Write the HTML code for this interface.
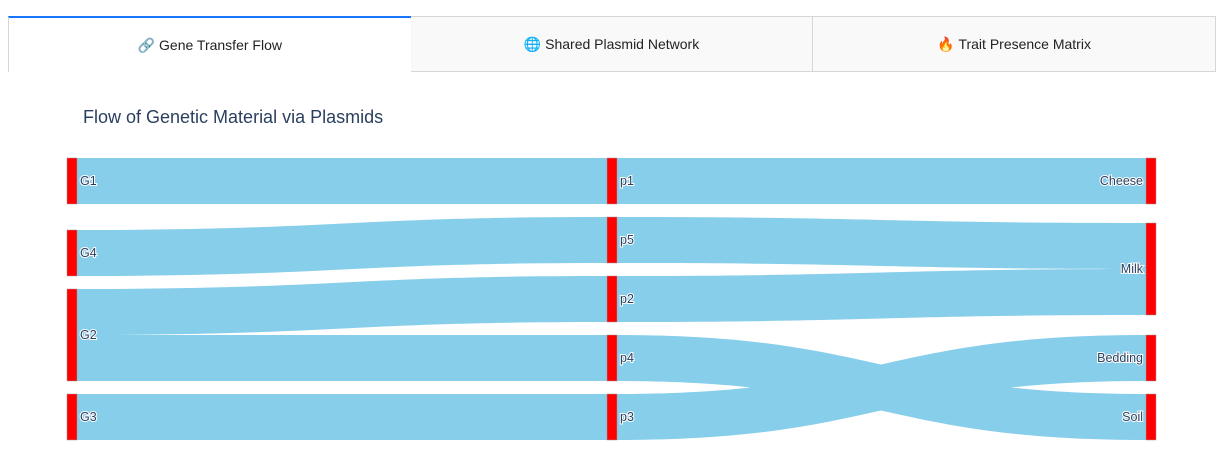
<!DOCTYPE html>
<html><head><meta charset="utf-8"><style>
body{margin:0;width:1224px;height:460px;background:#fff;font-family:"Liberation Sans",sans-serif;overflow:hidden;position:relative}
.tabs{position:absolute;left:8px;top:16px;width:1208px;height:56px;display:flex}
.tab{flex:1;box-sizing:border-box;height:56px;background:#f9f9f9;border:1px solid #d6d6d6;display:flex;align-items:center;justify-content:center;font-size:14px;color:#222}
.tab.a{background:#fff;border:none;border-top:2px solid #1975fa;border-left:1px solid #d6d6d6;padding-bottom:0}
.tab+.tab{border-left:none}
svg{position:absolute;left:0;top:0}
text{font-family:"Liberation Sans",sans-serif;font-size:12.5px;fill:#2a3f5f;paint-order:stroke;stroke:#fff;stroke-width:2px}
</style></head><body>
<div class="tabs">
<div class="tab a">🔗 Gene Transfer Flow</div>
<div class="tab">🌐 Shared Plasmid Network</div>
<div class="tab">🔥 Trait Presence Matrix</div>
</div>
<div style="position:absolute;left:83px;top:107px;font-size:18px;color:#2a3f5f">Flow of Genetic Material via Plasmids</div>
<svg width="1224" height="460">
<g fill="#87ceeb">
<path d="M77 158C342 158 342 158 607 158L607 204C342 204 342 204 77 204Z"/>
<path d="M77 230C342 230 342 217 607 217L607 263C342 263 342 276 77 276Z"/>
<path d="M77 289C342 289 342 276 607 276L607 322C342 322 342 335 77 335Z"/>
<path d="M77 335C342 335 342 335 607 335L607 381C342 381 342 381 77 381Z"/>
<path d="M77 394C342 394 342 394 607 394L607 440C342 440 342 440 77 440Z"/>
<path d="M617 158C881 158 881 158 1146 158L1146 204C881 204 881 204 617 204Z"/>
<path d="M617 217C881 217 881 223 1146 223L1146 269C881 269 881 263 617 263Z"/>
<path d="M617 276C881 276 881 269 1146 269L1146 315C881 315 881 322 617 322Z"/>
<path d="M617 335C881 335 881 394 1146 394L1146 440C881 440 881 381 617 381Z"/>
<path d="M617 394C881 394 881 335 1146 335L1146 381C881 381 881 440 617 440Z"/>
</g>
<g fill="#f00" stroke="#999" stroke-width="0.5">
<rect x="67" y="158" width="10" height="46"/><rect x="67" y="230" width="10" height="46"/>
<rect x="67" y="289" width="10" height="92"/><rect x="67" y="394" width="10" height="46"/>
<rect x="607" y="158" width="10" height="46"/><rect x="607" y="217" width="10" height="46"/>
<rect x="607" y="276" width="10" height="46"/><rect x="607" y="335" width="10" height="46"/>
<rect x="607" y="394" width="10" height="46"/>
<rect x="1146" y="158" width="10" height="46"/><rect x="1146" y="223" width="10" height="92"/>
<rect x="1146" y="335" width="10" height="46"/><rect x="1146" y="394" width="10" height="46"/>
</g>
<text x="80" y="185">G1</text><text x="80" y="257">G4</text><text x="80" y="339">G2</text><text x="80" y="421">G3</text>
<text x="620" y="185">p1</text><text x="620" y="244">p5</text><text x="620" y="303">p2</text><text x="620" y="362">p4</text><text x="620" y="421">p3</text>
<g text-anchor="end"><text x="1143" y="185">Cheese</text><text x="1143" y="273">Milk</text><text x="1143" y="362">Bedding</text><text x="1143" y="421">Soil</text></g>
</svg>
</body></html>
